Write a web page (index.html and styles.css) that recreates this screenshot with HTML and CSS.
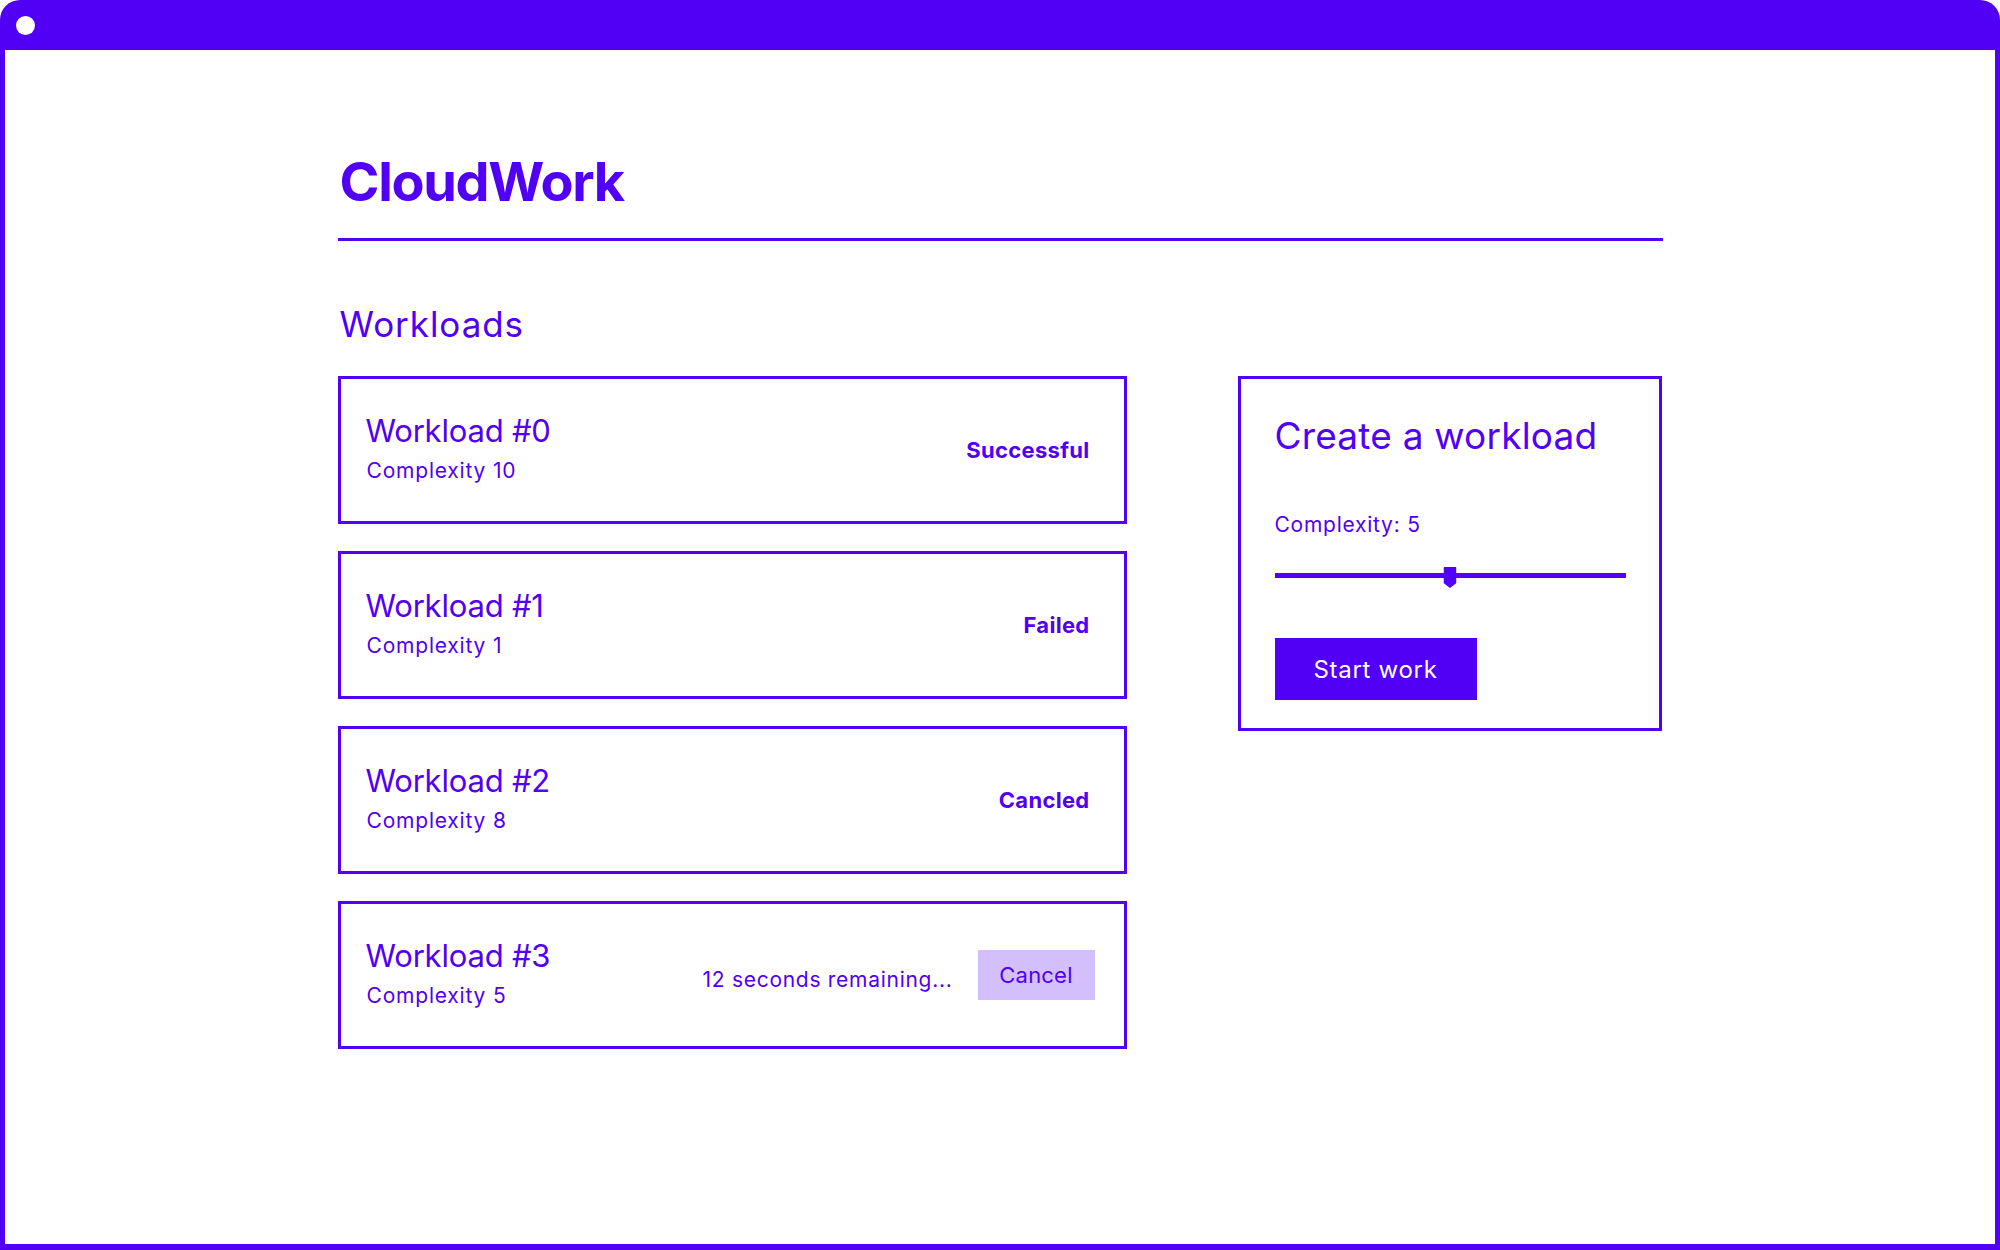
FILE: index.html
```html
<!DOCTYPE html>
<html lang="en">
<head>
<meta charset="utf-8">
<title>CloudWork</title>
<link rel="stylesheet" href="styles.css">
</head>
<body>
<div class="window">
  <div class="titlebar"><span class="dot"></span></div>
  <main class="content">
    <div class="page">
      <header class="header">
        <h1 class="brand">CloudWork</h1>
      </header>
      <h2 class="section-title">Workloads</h2>
      <div class="columns">
        <div class="list">
          <div class="card">
            <div class="info">
              <div class="wl-title">Workload #0</div>
              <div class="wl-sub">Complexity 10</div>
            </div>
            <div class="status">Successful</div>
          </div>
          <div class="card">
            <div class="info">
              <div class="wl-title">Workload #1</div>
              <div class="wl-sub">Complexity 1</div>
            </div>
            <div class="status">Failed</div>
          </div>
          <div class="card">
            <div class="info">
              <div class="wl-title">Workload #2</div>
              <div class="wl-sub">Complexity 8</div>
            </div>
            <div class="status">Cancled</div>
          </div>
          <div class="card">
            <div class="info">
              <div class="wl-title">Workload #3</div>
              <div class="wl-sub">Complexity 5</div>
            </div>
            <div class="running">
              <span class="remaining">12 seconds remaining...</span>
              <button class="cancel-btn">Cancel</button>
            </div>
          </div>
        </div>
        <section class="create">
          <h3 class="create-title">Create a workload</h3>
          <div class="field-label">Complexity: 5</div>
          <div class="slider">
            <div class="track"></div>
            <svg class="thumb" style="left: 50%" width="13" height="21" viewBox="0 0 13 21"><path d="M1 0 H12 Q13 0 13 1 V16 L6.5 21 L0 16 V1 Q0 0 1 0 Z" fill="#5100f5"/></svg>
          </div>
          <button class="start-btn">Start work</button>
        </section>
      </div>
    </div>
  </main>
</div>
</body>
</html>
```
FILE: styles.css
```css
* { box-sizing: border-box; }
html, body {
  margin: 0;
  padding: 0;
  background: #ffffff;
}
body {
  font-family: "Inter", "Noto Sans", sans-serif;
  color: #5100f5;
}
.window {
  width: 2000px;
  height: 1250px;
  background: #5100f5;
  border-radius: 20px 20px 0 0;
  padding: 0 5px 6px 5px;
  display: flex;
  flex-direction: column;
}
.titlebar {
  height: 50px;
  flex: 0 0 50px;
  display: flex;
  align-items: center;
  padding-left: 11px;
}
.dot {
  width: 19px;
  height: 19px;
  border-radius: 50%;
  background: #ffffff;
}
.content {
  flex: 1;
  background: #ffffff;
}
.page {
  width: 1325px;
  margin: 0 auto;
  padding-top: 99px;
}
.header {
  padding-bottom: 23px;
  border-bottom: 3px solid #5100f5;
}
.brand {
  margin: 0;
  font-size: 54px;
  line-height: 66px;
  font-weight: 700;
  letter-spacing: -1.3px;
  padding-left: 2px;
}
.section-title {
  margin: 63px 0 31px 0;
  font-size: 35px;
  line-height: 41px;
  font-weight: 400;
  letter-spacing: 0.95px;
  padding-left: 2px;
}
.columns {
  display: flex;
  align-items: flex-start;
  gap: 111px;
}
.list {
  width: 789px;
  display: flex;
  flex-direction: column;
  gap: 27px;
}
.card {
  height: 148px;
  border: 3px solid #5100f5;
  padding: 0 29px 0 25px;
  display: flex;
  align-items: center;
  justify-content: space-between;
}
.info {
  display: flex;
  flex-direction: column;
  gap: 8px;
  margin-bottom: 4px;
}
.wl-title {
  font-size: 31px;
  line-height: 38px;
  letter-spacing: -0.2px;
}
.wl-sub {
  font-size: 21px;
  line-height: 26px;
  letter-spacing: 0.8px;
  padding-left: 1px;
}
.status {
  font-size: 22px;
  line-height: 27px;
  font-weight: 700;
  letter-spacing: 0.3px;
  margin-right: 5px;
}
.running {
  display: flex;
  align-items: center;
  gap: 25px;
}
.remaining {
  font-size: 21px;
  line-height: 26px;
  letter-spacing: 0.72px;
  padding-top: 10px;
}
.cancel-btn {
  width: 117px;
  height: 50px;
  border: none;
  padding: 0;
  background: #d3bffc;
  color: #5100f5;
  font-family: "Inter", "Noto Sans", sans-serif;
  font-size: 22px;
  letter-spacing: 0.2px;
}
.create {
  width: 424px;
  border: 3px solid #5100f5;
  padding: 34px 33px 28px 34px;
}
.create-title {
  margin: 0;
  font-size: 37px;
  line-height: 45px;
  font-weight: 400;
  letter-spacing: 0.2px;
}
.field-label {
  margin-top: 54px;
  font-size: 21px;
  line-height: 26px;
  letter-spacing: 0.75px;
}
.slider {
  position: relative;
  margin-top: 29px;
  height: 21px;
  padding-top: 6px;
}
.track {
  height: 5px;
  background: #5100f5;
}
.thumb {
  position: absolute;
  top: 0;
  transform: translateX(-50%);
  display: block;
}
.start-btn {
  display: block;
  margin-top: 50px;
  height: 62px;
  padding: 0 39px;
  border: none;
  background: #5100f5;
  color: #ffffff;
  font-family: "Inter", "Noto Sans", sans-serif;
  font-size: 24px;
  letter-spacing: 0.7px;
}
```
